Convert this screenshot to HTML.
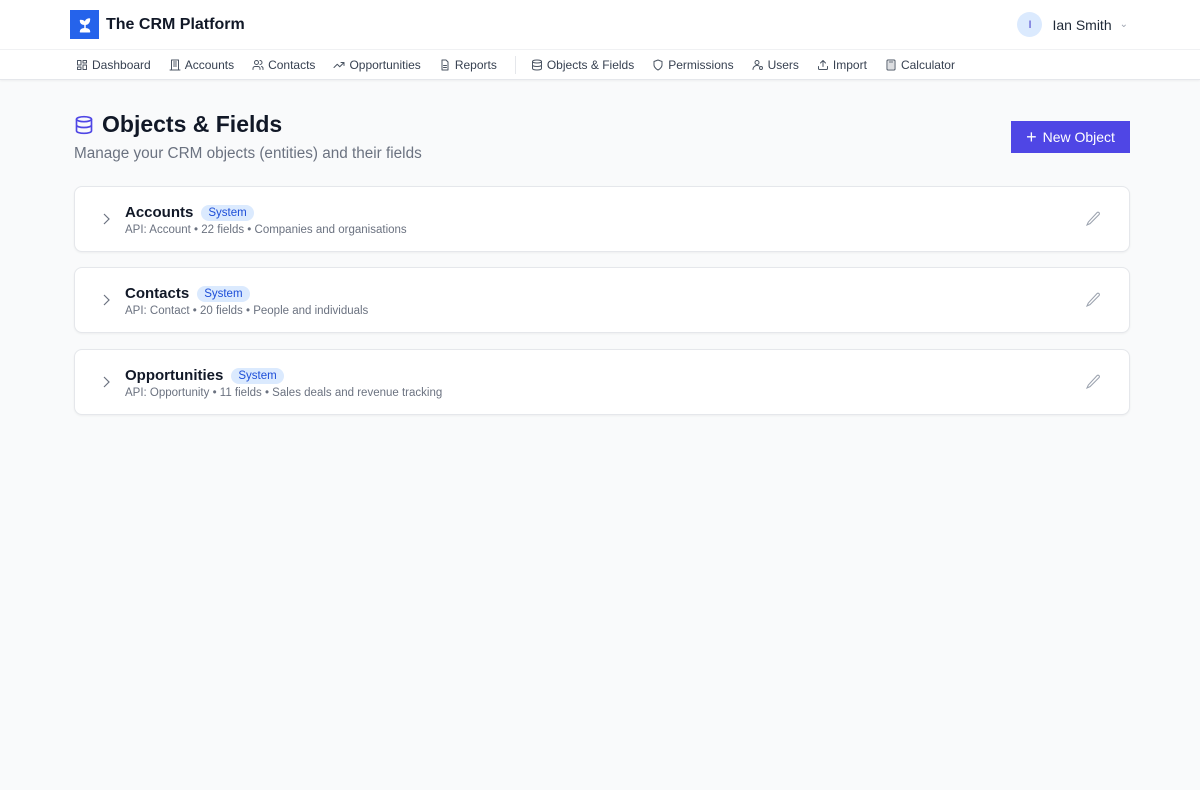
<!DOCTYPE html>
<html><head><meta charset="utf-8"><style>
*{box-sizing:border-box;margin:0;padding:0}
body{width:1200px;height:790px;background:#f9fafb;font-family:"Liberation Sans",sans-serif;color:#111827;overflow:hidden}
.top{height:50px;background:#fff;position:relative;border-bottom:1px solid #f0f1f3}
.logo{position:absolute;left:70px;top:10px;width:29px;height:29px;background:#2563eb;display:flex;align-items:center;justify-content:center}
.brand{position:absolute;left:106px;top:16px;font-size:16px;font-weight:bold}
.user{position:absolute;right:72px;top:12px;display:flex;align-items:center;gap:8px;font-size:14px;color:#1f2937}
.av{width:25px;height:25px;border-radius:50%;background:#dbeafe;color:#4338ca;font-size:11px;display:flex;align-items:center;justify-content:center;margin-right:2px}
.nav{height:30px;background:#fff;border-bottom:1px solid #e5e7eb;box-shadow:0 1px 2px rgba(0,0,0,.05);display:flex;align-items:center;padding-left:76px;padding-top:1px;font-size:12px;color:#374151}
.nav span{display:flex;align-items:center;gap:4px;margin-right:18px}
.nav svg{width:12px;height:12px;fill:none;stroke:#4b5563;stroke-width:2;stroke-linecap:round;stroke-linejoin:round}
.sep{width:1px;height:18px;background:#e5e7eb;margin-right:15px}
h1{position:absolute;left:102px;top:111px;font-size:23px;font-weight:bold}
.dbi{position:absolute;left:74px;top:114px}
.sub{position:absolute;left:74px;top:145px;font-size:15.3px;color:#6b7280}
.btn{position:absolute;left:1011px;top:121px;width:119px;height:32px;background:#4f46e5;color:#fff;font-size:14px;display:flex;align-items:center;justify-content:center;gap:6px}
.card{position:absolute;left:74px;width:1056px;height:66px;background:#fff;border:1px solid #e5e7eb;border-radius:8px;box-shadow:0 1px 2px rgba(0,0,0,.05)}
.card .chev{position:absolute;left:26px;top:26px}
.card .t{position:absolute;left:50px;top:17px;font-size:15px;font-weight:bold;display:flex;align-items:center;gap:8px}
.badge{font-size:11.5px;font-weight:normal;color:#1d4ed8;background:#dbeafe;border-radius:9px;padding:2px 7px}
.card .d{position:absolute;left:50px;top:37px;font-size:11.5px;color:#6b7280}
.card .pen{position:absolute;right:28px;top:24px}
</style></head><body>
<div class="top">
<div class="logo"><svg width="18" height="18" viewBox="0 0 24 24" fill="none" stroke="#fff" stroke-width="2" stroke-linecap="round" stroke-linejoin="round"><path d="M12 20v-9"/><path d="M12 11C12 8 10 6 6 6c0 3 2 5 6 5z" fill="#fff"/><path d="M12 11c0-4 2-7 6-7 0 4-2 7-6 7z" fill="#fff"/><path d="M6 21c0-3 3-4 6-4s6 1 6 4z" fill="#fff"/></svg></div>
<div class="brand">The CRM Platform</div>
<div class="user"><div class="av">I</div>Ian Smith <span style="color:#9ca3af;font-size:10px">&#8964;</span></div>
</div>
<div class="nav">
<span><svg viewBox="0 0 24 24"><rect x="3" y="3" width="7" height="9"/><rect x="14" y="3" width="7" height="5"/><rect x="14" y="12" width="7" height="9"/><rect x="3" y="16" width="7" height="5"/></svg>Dashboard</span>
<span><svg viewBox="0 0 24 24"><rect x="5" y="2" width="14" height="20"/><path d="M9 6h6M9 10h6M9 14h6M2 22h20"/></svg>Accounts</span>
<span><svg viewBox="0 0 24 24"><circle cx="9" cy="7" r="4"/><path d="M2 21v-2a4 4 0 014-4h6a4 4 0 014 4v2M16 3a4 4 0 010 8M22 21v-2a4 4 0 00-3-4"/></svg>Contacts</span>
<span><svg viewBox="0 0 24 24"><path d="M22 7l-8.5 8.5-5-5L2 17M16 7h6v6"/></svg>Opportunities</span>
<span><svg viewBox="0 0 24 24"><path d="M14 2H6v20h12V6z"/><path d="M9 13h6M9 17h6"/></svg>Reports</span>
<div class="sep"></div>
<span><svg viewBox="0 0 24 24"><ellipse cx="12" cy="5" rx="9" ry="3"/><path d="M3 5v14c0 1.7 4 3 9 3s9-1.3 9-3V5M3 12c0 1.7 4 3 9 3s9-1.3 9-3"/></svg>Objects &amp; Fields</span>
<span><svg viewBox="0 0 24 24"><path d="M12 22s8-4 8-10V5l-8-3-8 3v7c0 6 8 10 8 10z"/></svg>Permissions</span>
<span><svg viewBox="0 0 24 24"><circle cx="10" cy="7" r="4"/><path d="M2 21a8 8 0 0112-7"/><circle cx="18" cy="18" r="3"/></svg>Users</span>
<span><svg viewBox="0 0 24 24"><path d="M21 15v4a2 2 0 01-2 2H5a2 2 0 01-2-2v-4M17 8l-5-5-5 5M12 3v12"/></svg>Import</span>
<span><svg viewBox="0 0 24 24"><rect x="4" y="2" width="16" height="20" rx="2"/><path d="M8 6h8M8 10h.01M12 10h.01M16 10h.01M8 14h.01M12 14h.01M16 14h.01M8 18h.01M12 18h.01M16 18h.01"/></svg>Calculator</span>
</div>
<svg class="dbi" width="20" height="22" viewBox="0 0 24 24" fill="none" stroke="#4f46e5" stroke-width="2"><ellipse cx="12" cy="5" rx="9" ry="3"/><path d="M3 5v14c0 1.7 4 3 9 3s9-1.3 9-3V5M3 12c0 1.7 4 3 9 3s9-1.3 9-3"/></svg>
<h1>Objects &amp; Fields</h1>
<div class="sub">Manage your CRM objects (entities) and their fields</div>
<div class="btn"><span style="font-size:18px;line-height:1">+</span>New Object</div>
<div class="card" style="top:186px"><svg class="chev" width="10" height="12" viewBox="0 0 10 12" fill="none" stroke="#6b7280" stroke-width="1.2"><path d="M3 1l5 5-5 5"/></svg><div class="t">Accounts <span class="badge">System</span></div><div class="d">API: Account • 22 fields • Companies and organisations</div><svg class="pen" width="16" height="16" viewBox="0 0 24 24" fill="none" stroke="#9ca3af" stroke-width="1.6"><path d="M18 2.5a2.1 2.1 0 013 3L7.5 19 3 21l2-4.5z"/></svg></div>
<div class="card" style="top:267px"><svg class="chev" width="10" height="12" viewBox="0 0 10 12" fill="none" stroke="#6b7280" stroke-width="1.2"><path d="M3 1l5 5-5 5"/></svg><div class="t">Contacts <span class="badge">System</span></div><div class="d">API: Contact • 20 fields • People and individuals</div><svg class="pen" width="16" height="16" viewBox="0 0 24 24" fill="none" stroke="#9ca3af" stroke-width="1.6"><path d="M18 2.5a2.1 2.1 0 013 3L7.5 19 3 21l2-4.5z"/></svg></div>
<div class="card" style="top:349px"><svg class="chev" width="10" height="12" viewBox="0 0 10 12" fill="none" stroke="#6b7280" stroke-width="1.2"><path d="M3 1l5 5-5 5"/></svg><div class="t">Opportunities <span class="badge">System</span></div><div class="d">API: Opportunity • 11 fields • Sales deals and revenue tracking</div><svg class="pen" width="16" height="16" viewBox="0 0 24 24" fill="none" stroke="#9ca3af" stroke-width="1.6"><path d="M18 2.5a2.1 2.1 0 013 3L7.5 19 3 21l2-4.5z"/></svg></div>
</body></html>
